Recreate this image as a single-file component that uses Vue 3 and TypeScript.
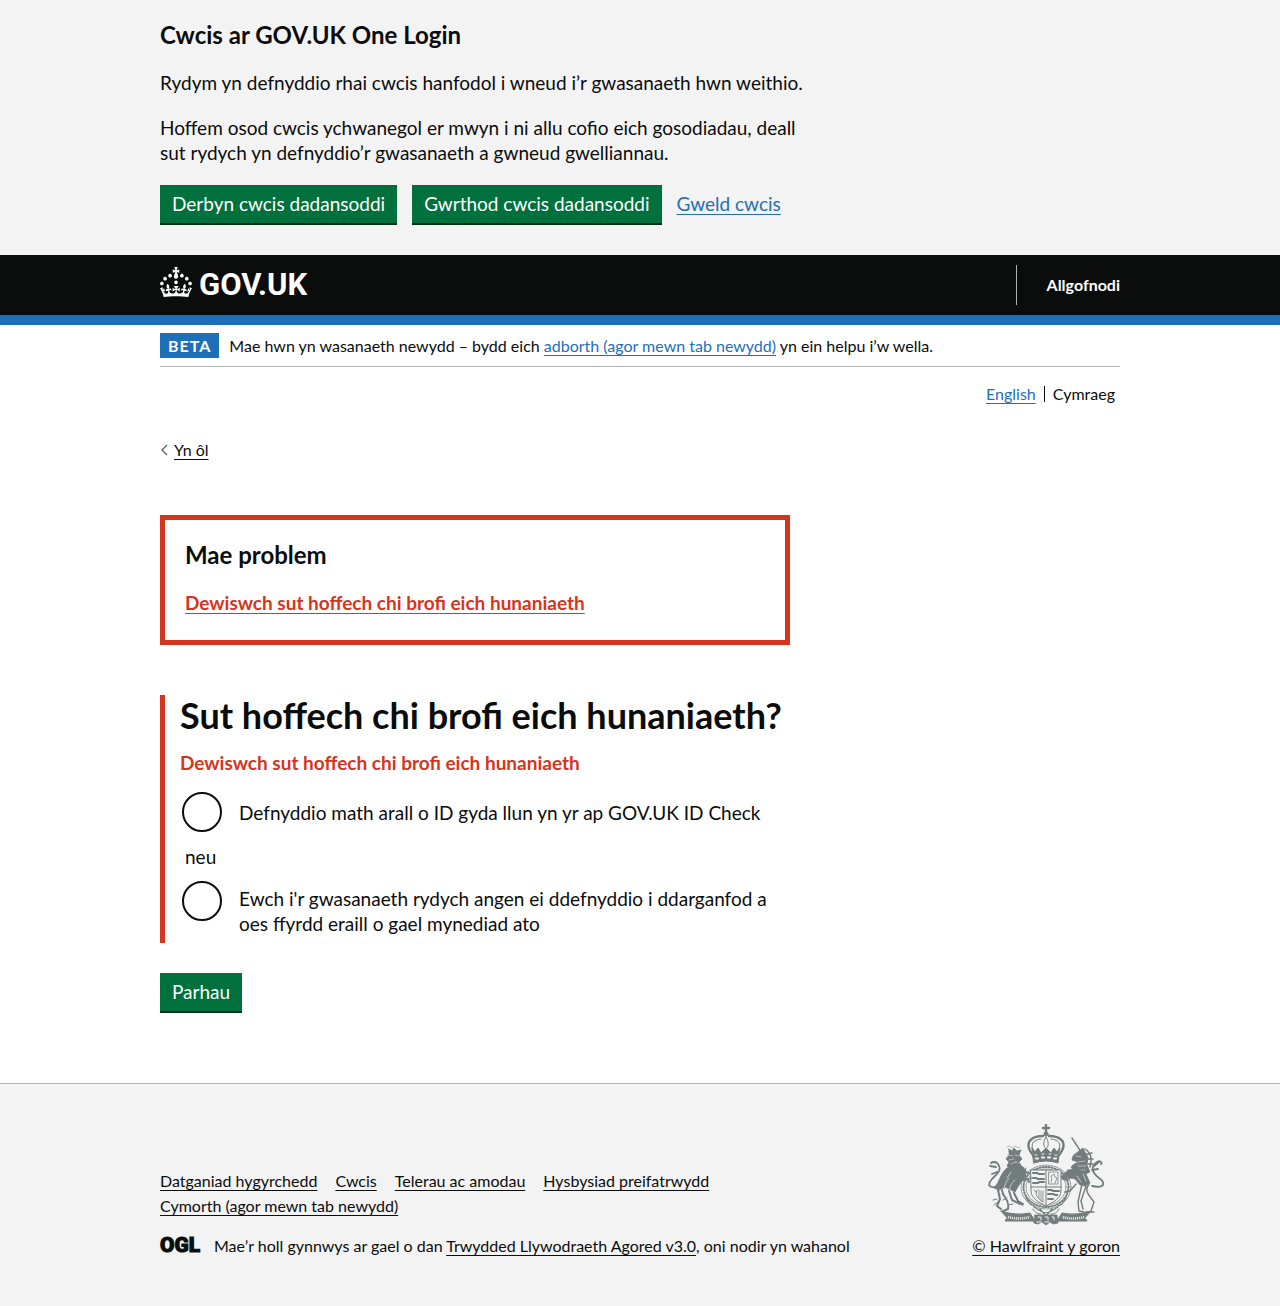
<script setup lang="ts">
import { ref } from 'vue'

interface Choice {
  id: string
  label: string
}

const choices: Choice[] = [
  { id: 'app', label: 'Defnyddio math arall o ID gyda llun yn yr ap GOV.UK ID Check' },
  {
    id: 'service',
    label: "Ewch i'r gwasanaeth rydych angen ei ddefnyddio i ddarganfod a oes ffyrdd eraill o gael mynediad ato",
  },
]

const footerLinks: string[] = [
  'Datganiad hygyrchedd',
  'Cwcis',
  'Telerau ac amodau',
  'Hysbysiad preifatrwydd',
  'Cymorth (agor mewn tab newydd)',
]

const errorText = 'Dewiswch sut hoffech chi brofi eich hunaniaeth'
const selected = ref<string>('')
</script>

<template>
  <div class="page">
    <section class="cookies" aria-label="Cwcis ar GOV.UK One Login">
      <div class="container">
        <div class="cookie-text">
          <h2 class="heading-m">Cwcis ar GOV.UK One Login</h2>
          <p class="body">Rydym yn defnyddio rhai cwcis hanfodol i wneud i’r gwasanaeth hwn weithio.</p>
          <p class="body">
            Hoffem osod cwcis ychwanegol er mwyn i ni allu cofio eich gosodiadau, deall sut rydych yn
            defnyddio’r gwasanaeth a gwneud gwelliannau.
          </p>
        </div>
        <div class="button-group">
          <button type="button" class="button">Derbyn cwcis dadansoddi</button>
          <button type="button" class="button">Gwrthod cwcis dadansoddi</button>
          <a href="#" class="link body-link">Gweld cwcis</a>
        </div>
      </div>
    </section>

    <header class="header">
      <div class="container header-row">
        <a href="#" class="logo">
          <svg class="crown" viewBox="0 0 32 30" width="32" height="30" aria-hidden="true">
            <path
              fill="currentColor"
              d="M22.6 10.4c-1 .4-2-.1-2.4-1-.4-.9.1-2 1-2.4.9-.4 2 .1 2.4 1s-.1 2-1 2.4m-5.9 6.7c-.9.4-2-.1-2.4-1-.4-.9.1-2 1-2.4.9-.4 2 .1 2.4 1s-.1 2-1 2.4m10.8-3.7c-1 .4-2-.1-2.4-1-.4-.9.1-2 1-2.4.9-.4 2 .1 2.4 1s0 2-1 2.4m3.3 4.8c-1 .4-2-.1-2.4-1-.4-.9.1-2 1-2.4.9-.4 2 .1 2.4 1s-.1 2-1 2.4M17 4.7l2.3 1.2V2.5l-2.3.7-.2-.2.9-3h-3.4l.9 3-.2.2c-.1.1-2.3-.7-2.3-.7v3.4L15 4.7c.1.1.1.2.2.2l-1.3 4c-.1.2-.1.4-.1.6 0 1.1.8 2 1.9 2.2h.7c1-.2 1.9-1.1 1.9-2.1 0-.2 0-.4-.1-.6l-1.3-4c-.1-.2 0-.2.1-.3m-7.6 5.7c.9.4 2-.1 2.4-1 .4-.9-.1-2-1-2.4-.9-.4-2 .1-2.4 1s0 2 1 2.4m-5 3c.9.4 2-.1 2.4-1 .4-.9-.1-2-1-2.4-.9-.4-2 .1-2.4 1s.1 2 1 2.4m-3.2 4.8c.9.4 2-.1 2.4-1 .4-.9-.1-2-1-2.4-.9-.4-2 .1-2.4 1s0 2 1 2.4m14.8 11c4.4 0 8.6.3 12.3.8 1.1-4.5 2.4-7 3.7-8.8l-2.5-.9c.2 1.3.3 1.9 0 2.7-.4-.4-.8-1.1-1.1-2.3l-1.2 4c.7-.5 1.3-.8 2-.9-1.1 2.5-2.6 3.1-3.5 3-1.1-.2-1.7-1.2-1.5-2.1.3-1.2 1.5-1.5 2.1-.1 1.1-2.3-.8-3-2-2.3 1.9-1.9 2.1-3.5.6-5.6-2.1 1.6-2.1 3.2-1.2 5.5-1.2-1.4-3.2-.6-2.5 1.6.9-1.4 2.1-.5 1.9.8-.2 1.1-1.7 2.1-3.5 1.9-2.7-.2-2.9-2.1-2.9-3.6.7-.1 1.9.5 2.9 1.9l.4-4.3c-1.1 1.1-2.1 1.4-3.2 1.4.4-1.2 2.1-3 2.1-3h-5.4s1.7 1.9 2.1 3c-1.1 0-2.1-.2-3.2-1.4l.4 4.3c1-1.4 2.2-2 2.9-1.9-.1 1.5-.2 3.4-2.9 3.6-1.9.2-3.4-.8-3.5-1.9-.2-1.3 1-2.2 1.9-.8.7-2.3-1.2-3-2.5-1.6.9-2.2.9-3.9-1.2-5.5-1.5 2-1.3 3.7.6 5.6-1.2-.7-3.1 0-2 2.3.6-1.4 1.8-1.1 2.1.1.2.9-.3 1.9-1.5 2.1-.9.2-2.4-.5-3.5-3 .6 0 1.2.3 2 .9l-1.2-4c-.3 1.1-.7 1.9-1.1 2.3-.3-.8-.2-1.4 0-2.7l-2.9.9C1.3 23 2.6 25.5 3.7 30c3.7-.5 7.9-.8 12.3-.8"
            />
          </svg>
          <span class="logo-text">GOV.UK</span>
        </a>
        <nav class="account" aria-label="Cyfrif">
          <a href="#" class="sign-out">Allgofnodi</a>
        </nav>
      </div>
    </header>

    <div class="container">
      <div class="phase">
        <strong class="tag">BETA</strong>
        <span>
          Mae hwn yn wasanaeth newydd – bydd eich
          <a href="#" class="link">adborth (agor mewn tab newydd)</a>
          yn ein helpu i’w wella.
        </span>
      </div>

      <nav class="languages" aria-label="Iaith">
        <a href="#" class="link">English</a>
        <span class="current">Cymraeg</span>
      </nav>

      <a href="#" class="back">
        <svg viewBox="0 0 8 12" width="8" height="12" aria-hidden="true">
          <path d="M7 1 2 6l5 5" fill="none" stroke="#505a5f" stroke-width="1.2" />
        </svg>
        <span class="back-text">Yn ôl</span>
      </a>

      <main class="two-thirds main">
        <div class="error-summary" role="alert">
          <h2 class="heading-m">Mae problem</h2>
          <a href="#choice-app" class="error-link">{{ errorText }}</a>
        </div>

        <form @submit.prevent>
          <fieldset class="group" aria-describedby="choice-error">
            <legend><h1 class="title">Sut hoffech chi brofi eich hunaniaeth?</h1></legend>
            <p id="choice-error" class="error-message">{{ errorText }}</p>
            <div class="radios">
              <template v-for="(choice, index) in choices" :key="choice.id">
                <div v-if="index > 0" class="divider">neu</div>
                <div class="radio">
                  <input
                    :id="'choice-' + choice.id"
                    v-model="selected"
                    type="radio"
                    name="choice"
                    :value="choice.id"
                  />
                  <label :for="'choice-' + choice.id">{{ choice.label }}</label>
                </div>
              </template>
            </div>
          </fieldset>
          <button type="submit" class="button">Parhau</button>
        </form>
      </main>
    </div>

    <footer class="footer">
      <div class="container footer-row">
        <div class="footer-main">
          <ul class="footer-links">
            <li v-for="item in footerLinks" :key="item">
              <a href="#" class="footer-link">{{ item }}</a>
            </li>
          </ul>
          <div class="licence">
            <svg class="ogl" viewBox="0 0 41 17" width="41" height="17" role="img" aria-label="OGL">
              <text x="0" y="16">OGL</text>
            </svg>
            <span>
              Mae’r holl gynnwys ar gael o dan
              <a href="#" class="footer-link">Trwydded Llywodraeth Agored v3.0</a>, oni nodir yn wahanol
            </span>
          </div>
        </div>
        <a href="#" class="copyright">
          <svg class="arms" viewBox="0 0 116 102" width="116" height="102" aria-hidden="true">
            <g fill="none" stroke="#727c7a" stroke-width="1" stroke-linecap="round" stroke-linejoin="round">
              <!-- Crown -->
              <path d="M58 1v8M55 4h6" stroke-width="2.4" />
              <circle cx="58" cy="10" r="2" fill="#727c7a" />
              <path d="M45 31C35 19 43 12 55 12M71 31c10-12 2-19-10-19" stroke-width="2.4" stroke-dasharray="1.6 .7" />
              <path d="M47 29c-6-9-2-13 6-14M69 29c6-9 2-13-6-14M58 13c-3 5-3 9 0 12 3-3 3-7 0-12Z" />
              <path d="M44 24l3 4 3-4 3 5 5-5 5 5 3-5 3 4 3-4-2 8H46Z" fill="#727c7a" />
              <path d="M45 32q13-4 26 0l-1 7q-12-4-24 0Z" fill="#727c7a" />
              <path d="M48 34.500h2m4-1h2m4 0h2m4 1h2" stroke="#f3f3f3" stroke-width="2" />
              <path d="M47 31h2m5-1h2m5 0h2m4 1h2" stroke="#f3f3f3" />
              <!-- Garter and shield -->
              <ellipse cx="58" cy="63" rx="25" ry="22" stroke-width=".7" />
              <ellipse cx="58" cy="63" rx="20" ry="18" stroke-width=".7" />
              <ellipse cx="58" cy="63" rx="22.500" ry="20" stroke-width="2" stroke-dasharray="1 2" />
              <path d="M43 46h30v21c0 7-7 11-15 15-8-4-15-8-15-15Z" fill="#f3f3f3" />
              <path d="M58 46v35M43 63h30" />
              <path d="M45 49h4l2 1h5M45 54h3l2 1h6M45 59h5l1-1h5M60 66h4l1 1h6M60 70h5l2 1h3M60 75h5" stroke-width="2" stroke-dasharray="2.500 1" />
              <path d="M61 48h9v12h-9ZM63 58l1-4-1-2 3-2 1 3 2 1-2 5M49 66q-4 6 6 12M51 66v8M53 67v10M55 67v11M46 66l3 3" stroke-width=".8" />
              <path d="M46 83c5 3 7 5 12 6 5-1 7-3 12-6M38 74l4 6 4 2M78 74l-4 6-4 2M52 85l6 7 6-7" stroke-width="1.200" />
              <!-- Lion -->
              <path d="M21 25l3 2 2-3 3 3 4-1-2 5 3 4-3 3 2 4-3 5-6-2-5-3 2-4-3-3 3-4Z" fill="#727c7a" stroke-width=".8" />
              <path d="M19 23l3-1 2 2 3-2 3 2 2-1M20 31l5 1m-4 4 5-1m-3 5 5-2m-1-7 4 1m-4 6 4 1" stroke="#b4bcba" />
              <path d="M19 44c-8 7-6 12-13 20l5 2 6-3 10 5 4-7 7-9-2-8-6-5Z" fill="#727c7a" stroke-width=".8" />
              <path d="M14 66c0 8 8 8 6 19l-5 2M10 66l2 9-3 7 4 3M26 69l4 8 5 3M21 67l3 9 8 4M29 51l8-4 3 2M33 56l7-1 1 3" stroke-width="2" />
              <path d="M9 75l-4 1m5 2-4 3m9-5 4-2m1 7 5-1m7-1 3 3M37 47l1-3m3 11 3-1" />
              <path d="M21 54c-3 4-5 8-5 11M27 56c-4 3-6 8-5 10M23 48l-4 6" stroke="#c4cac8" />
              <path d="M12 62C0 65-1 61 4 55c6-6 10-9 6-15-2-3-6-2-7-1m5 4-6-1m7 6-5 2" stroke-width="1.800" />
              <!-- Unicorn -->
              <path d="M93 28 84 14" stroke-width="1.500" stroke-dasharray="2 .6" />
              <path d="M91 27l4-3 2 4 3 5-1 8 3 7-7 3-9-4-3-4 2-2 5-3-6-2 1-4Z" fill="#727c7a" stroke-width=".8" />
              <path d="M97 25c7 4 7 11 5 18M99 30l5-1m-4 6 5 0m-5 5 5 0" stroke-width="1.400" />
              <path d="M88 32l5 1m-3 5 7-1m-7 5 8 0m-6 4 5 0" stroke="#b4bcba" />
              <path d="M80 46c8-2 14 0 18 4l4 9-5 3-5-1-5-6-7-2-5 3-2-3Z" fill="#727c7a" stroke-width=".8" />
              <path d="M101 60c-6 8 2 13 5 18l-3 9M94 60l-4 18 1 9 5 1M88 60l-6 7-5 1M85 53l-8 3M98 62l-5 15 2 8M98 88h8" stroke-width="1.400" />
              <path d="M95 50l3 7m-9-5 4 6" stroke="#c4cac8" />
              <path d="M104 62c14 3 13-4 7-8-8-6-8-12-2-16 3-2 6 1 4 2m-7 2 5-4m-7 8 6-1" stroke-width="1.800" />
              <!-- Motto ribbon and compartment -->
              <path d="M13 87q15 5 29 2l5 8H17l2-3ZM103 87q-15 5-29 2l-5 8h30l-2-3Z" fill="#727c7a" />
              <path d="M20 93q10 3 22 0M96 93q-10 3-22 0" stroke="#f3f3f3" stroke-width="2.600" stroke-dasharray="1 1" stroke-linecap="butt" />
              <path d="M45 85c2 4 5 5 8 5M71 85c-2 4-5 5-8 5" />
              <path d="M47 91h22l1 8-5 1-3-2-4 3-4-3-4 2-4-1Z" fill="#727c7a" stroke-width=".8" />
              <path d="M50 93h3v3m4-3h3v3m4-3h2v3M49 98h4m4 0h4" stroke="#f3f3f3" />
            </g>
          </svg>
          <span class="footer-link">© Hawlfraint y goron</span>
        </a>
      </div>
    </footer>
  </div>
</template>

<style>
body {
  margin: 0;
  background: #fff;
}
</style>

<style scoped>
.page {
  color: #0b0c0c;
  font-family: Lato, Roboto, "Liberation Sans", Arial, sans-serif;
  font-size: 16px;
  line-height: 25px;
}

.container {
  max-width: 960px;
  margin: 0 auto;
}

.two-thirds {
  max-width: 630px;
}

.cookie-text {
  max-width: 650px;
}

h1,
h2,
p,
ul {
  margin: 0;
  padding: 0;
}

.heading-m {
  font-size: 24px;
  line-height: 30px;
  font-weight: 700;
  margin-bottom: 20px;
}

.body {
  font-size: 19px;
  line-height: 25px;
  margin-bottom: 20px;
}

.link {
  color: #1d70b8;
  text-underline-offset: 3px;
}

.cookies {
  background: #f3f3f3;
  padding: 20px 0 30px;
}

.button-group {
  display: flex;
  flex-wrap: wrap;
  gap: 15px;
}

.button {
  border: 0;
  padding: 6px 12px 7px;
  background: #00703c;
  box-shadow: 0 2px 0 #002d18;
  color: #fff;
  font-family: inherit;
  font-size: 19px;
  line-height: 25px;
  margin-bottom: 2px;
}

.body-link {
  font-size: 19px;
  line-height: 38px;
}

.header {
  background: #0b0c0c;
  border-bottom: 10px solid #1d70b8;
  color: #fff;
}

.header-row {
  display: flex;
  justify-content: space-between;
  align-items: center;
  height: 60px;
}

.logo {
  display: flex;
  align-items: center;
  gap: 7px;
  color: #fff;
  text-decoration: none;
}

.crown {
  margin-bottom: 6px;
}

.logo-text {
  font-family: Roboto, "Liberation Sans", Arial, sans-serif;
  font-size: 31px;
  line-height: 30px;
  font-weight: 700;
}

.account {
  border-left: 1px solid #b1b4b6;
  padding-left: 30px;
  line-height: 40px;
}

.sign-out {
  color: #fff;
  font-weight: 700;
  text-decoration: none;
}

.phase {
  display: flex;
  gap: 10px;
  padding: 8px 0;
  border-bottom: 1px solid #b1b4b6;
}

.tag {
  background: #1d70b8;
  color: #fff;
  padding: 0 8px;
  letter-spacing: 1px;
}

.languages {
  display: flex;
  justify-content: flex-end;
  padding: 19px 5px 0 0;
  line-height: 16px;
}

.current {
  border-left: 1px solid #0b0c0c;
  margin-left: 8px;
  padding-left: 8px;
}

.back {
  display: inline-flex;
  align-items: center;
  gap: 6px;
  margin-top: 35px;
  color: #0b0c0c;
  text-decoration: none;
}

.back-text {
  text-decoration: underline;
  text-underline-offset: 3px;
}

.main {
  padding: 53px 0 70px;
}

.error-summary {
  border: 5px solid #d4351c;
  padding: 20px 20px 25px;
  margin-bottom: 50px;
}

.error-link {
  display: block;
  color: #d4351c;
  font-size: 19px;
  font-weight: 700;
  text-underline-offset: 3px;
}

.group {
  border: 0;
  border-left: 5px solid #d4351c;
  margin: 0 0 30px;
  padding: 0 0 0 15px;
  min-width: 0;
}

legend {
  float: left;
  width: 100%;
  padding: 0;
  margin-bottom: 15px;
}

.title {
  font-size: 36px;
  line-height: 40px;
  font-weight: 700;
}

.error-message {
  clear: both;
  margin-bottom: 15px;
  color: #d4351c;
  font-size: 19px;
  font-weight: 700;
}

.radios {
  font-size: 19px;
}

.radio {
  display: flex;
  align-items: flex-start;
  gap: 17px;
  min-height: 44px;
}

.radio input {
  appearance: none;
  flex: none;
  width: 40px;
  height: 40px;
  margin: 2px 0 0 2px;
  border: 2px solid #0b0c0c;
  border-radius: 50%;
  background: #fff;
}

.radio input:checked {
  background: radial-gradient(#0b0c0c 10px, #fff 11px);
}

.radio label {
  align-self: center;
  padding: 7px 15px 7px 0;
}

.divider {
  padding: 10px 5px;
}

.footer {
  background: #f3f3f3;
  border-top: 1px solid #b1b4b6;
  padding: 40px 0 48px;
}

.footer-row {
  display: flex;
  justify-content: space-between;
  align-items: flex-end;
}

.footer-links {
  display: flex;
  flex-wrap: wrap;
  column-gap: 18px;
  max-width: 630px;
  margin-bottom: 15px;
  list-style: none;
}

.footer-link {
  color: #0b0c0c;
  text-decoration: underline;
  text-underline-offset: 3px;
}

.licence {
  display: flex;
  gap: 13px;
}

.ogl {
  flex: none;
  margin-top: 3px;
  overflow: visible;
}

.ogl text {
  font-family: Roboto, sans-serif;
  font-size: 21px;
  font-weight: 900;
  fill: #0b0c0c;
  stroke: #0b0c0c;
  stroke-width: 1px;
}

.copyright {
  display: flex;
  flex-direction: column;
  align-items: center;
  gap: 7px;
  text-decoration: none;
}
</style>
